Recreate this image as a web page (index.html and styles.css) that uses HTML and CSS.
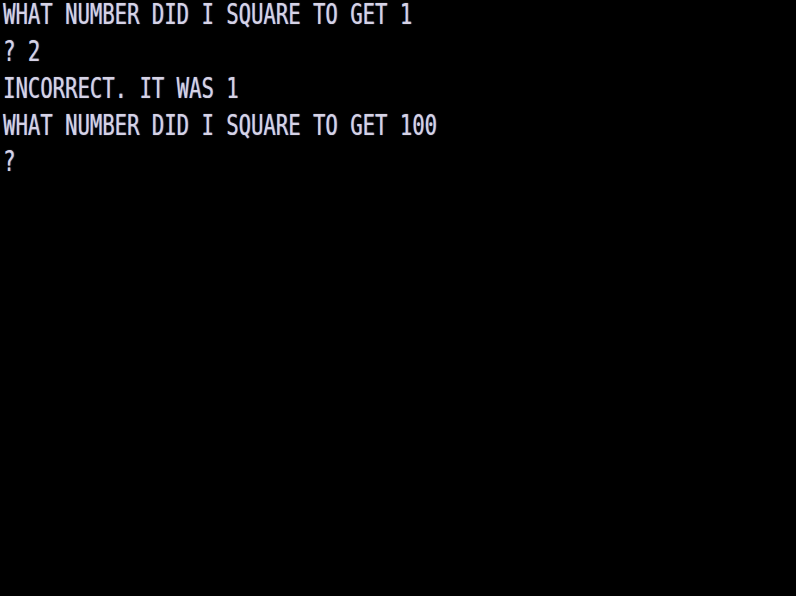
FILE: index.html
```html
<!DOCTYPE html>
<html>
<head>
<meta charset="utf-8">
<link rel="stylesheet" href="styles.css">
</head>
<body>
<div class="screen">
  <div class="line">WHAT NUMBER DID I SQUARE TO GET 1</div>
  <div class="line">? 2</div>
  <div class="line">INCORRECT. IT WAS 1</div>
  <div class="line">WHAT NUMBER DID I SQUARE TO GET 100</div>
  <div class="line">?</div>
</div>
</body>
</html>
```
FILE: styles.css
```css
html, body {
  margin: 0;
  padding: 0;
  background: #000;
  width: 796px;
  height: 596px;
  overflow: hidden;
}
.screen {
  display: flex;
  flex-direction: column;
  gap: 4.4px;
  padding: 0 0 0 3px;
  transform: scaleY(1.36);
  transform-origin: 0 0;
  font-family: "DejaVu Sans Mono", "Liberation Mono", monospace;
  font-size: 20.6px;
  line-height: 22.7px;
  color: #d6d3e6;
  text-shadow: 0.4px 0 0.8px rgba(220, 215, 240, 0.7);
}
.line {
  white-space: pre;
  height: 22.7px;
}
```
